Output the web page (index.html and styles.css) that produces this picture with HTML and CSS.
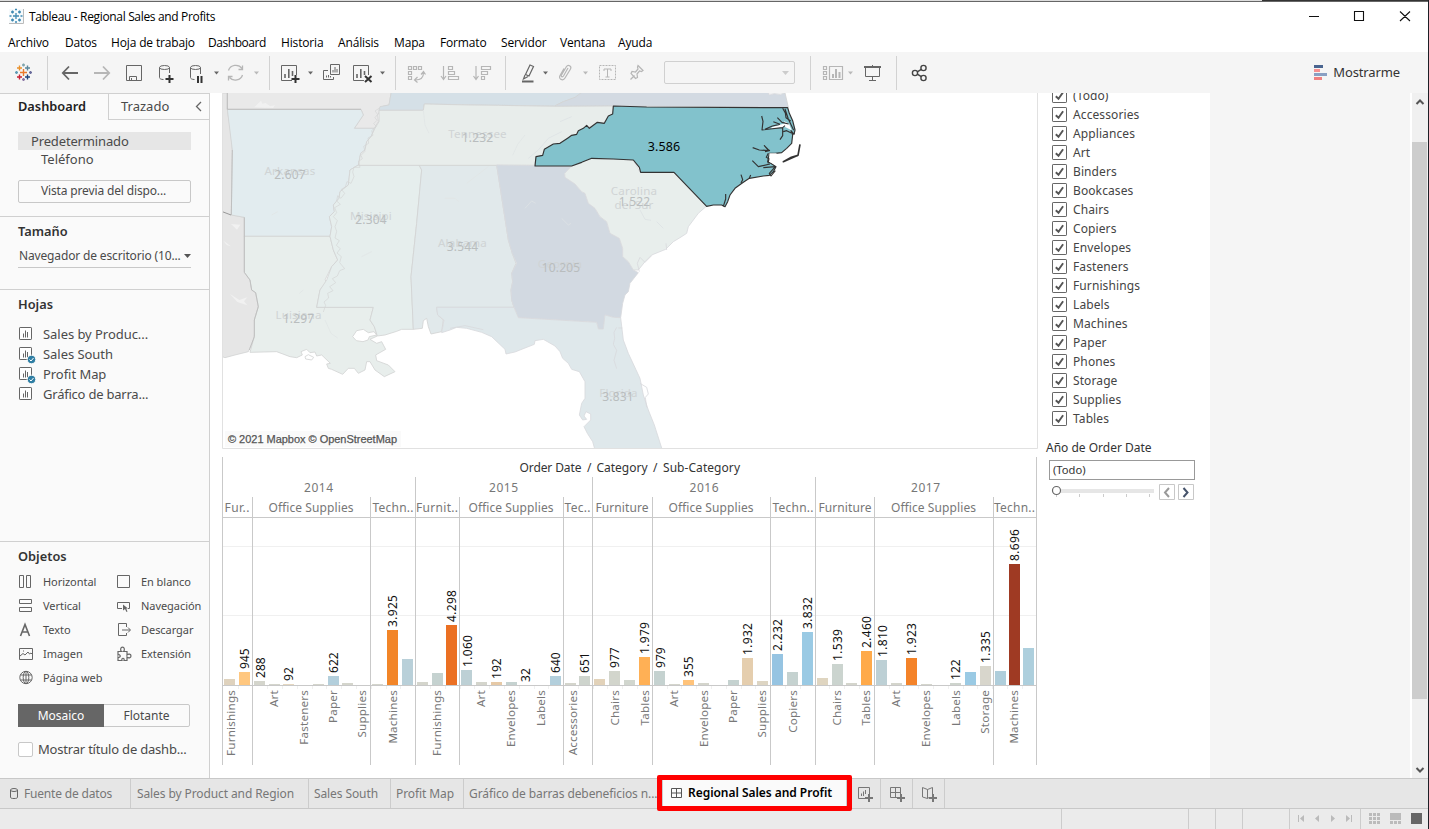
FILE: index.html
```html
<!DOCTYPE html>
<html lang="es">
<head>
<meta charset="utf-8">
<title>Tableau - Regional Sales and Profits</title>
<link rel="stylesheet" href="styles.css">
</head>
<body>
<svg width="0" height="0" class="defs">
  <symbol id="sheet" viewBox="0 0 18 18"><rect x="1.5" y="1.5" width="12" height="12" rx=".6" fill="#fff" stroke="#666"/><path d="M5.5 7.5v4M7.5 4.5v7M9.500 6v5.500" fill="none" stroke="#666"/></symbol>
  <symbol id="used" viewBox="0 0 18 18"><use href="#sheet" width="18" height="18"/><circle cx="13.500" cy="13.500" r="4.300" fill="#2f7ea3" stroke="#fafafa"/><path d="M11.500 13.500l1.500 1.500 2.500-3" fill="none" stroke="#fff"/></symbol>
  <symbol id="check" viewBox="0 0 15 15"><rect x=".5" y=".5" width="14" height="14" rx=".6" fill="#fff" stroke="#666"/><path d="M3.800 8.200l2.700 2.600 4.600-6.600" fill="none" stroke="#555" stroke-width="1.900"/></symbol>
</svg>
<div class="window">
  <div class="edge"><span></span></div>
  <header class="titlebar">
    <svg width="29" height="28" viewBox="0 2 29 28"><path d="M9 9h14v14H9z" fill="#f6fafc"/><path d="M23.500 9v14.500H9" fill="none" stroke="#bbb"/><g stroke="#3f8ab2" stroke-width="1.300"><path d="M13 16h6M16 13v6M11 12h3M12.500 10.500v3M18 12h3M19.500 10.500v3M11 20h3M12.500 18.500v3M18 20h3M19.500 18.500v3M9.500 16h2M20.500 16h2M15 9.500h2M15 22h2"/></g></svg>
    <h1>Tableau - Regional Sales and Profits</h1>
    <svg class="controls" width="128" height="28" viewBox="1300 2 128 28"><path d="M1309 16.500h10M1354.500 11.500h9v9h-9zM1400 11.500l10 9.500M1410 11.500l-10 9.500" fill="none" stroke="#111" stroke-width="1.100"/></svg>
  </header>
  <nav class="menu"><a class="m1">Archivo</a><a class="m2">Datos</a><a class="m3">Hoja de trabajo</a><a class="m4">Dashboard</a><a class="m5">Historia</a><a class="m6">Análisis</a><a class="m7">Mapa</a><a class="m8">Formato</a><a class="m9">Servidor</a><a class="m10">Ventana</a><a>Ayuda</a></nav>
  <div class="toolbar">
    <svg width="47" height="41" viewBox="0 52 47 41" fill="none" stroke-width="1.400"><path d="M20 72.500h7M23.500 69v7" stroke="#eb7a2d"/><path d="M17 68h5M19.500 65.500v5" stroke="#e8912d"/><path d="M25 68h5M27.500 65.500v5" stroke="#5b879b"/><path d="M17 77h5M19.500 74.500v5" stroke="#c72035"/><path d="M25 77h5M27.500 74.500v5" stroke="#1f447e"/><path d="M22 65h3M23.500 63.500v3" stroke="#7fa5ae"/><path d="M22 79.500h3M23.500 78v3" stroke="#8a76a5"/><path d="M15 72.500h3M16.500 71v3" stroke="#5f9cb5"/><path d="M29 72.500h3M30.500 71v3" stroke="#6a6c9c"/></svg>
    <i class="sep"></i>
    <svg width="39" height="41" viewBox="48 52 39 41" class="ic bold"><path d="M78 73H63M69 66.500L62.800 73l6.200 6.500"/></svg>
    <svg width="31" height="41" viewBox="87 52 31 41" class="ic bold off"><path d="M94 73h15M103 66.500l6.200 6.500-6.200 6.500"/></svg>
    <svg width="32" height="41" viewBox="118 52 32 41" class="ic"><path d="M126.500 65.500h15v15h-15zM129.500 80v-3.500h7V80M131.500 78v2.500"/></svg>
    <svg width="31" height="41" viewBox="150 52 31 41" class="ic"><ellipse cx="164.500" cy="67.500" rx="5" ry="2"/><path d="M159.500 67.500v10c0 1.200 1.500 2 4 2M169.500 67.500V73"/><path class="dark" d="M169.500 75v8M165.500 79h8"/></svg>
    <svg width="41" height="41" viewBox="181 52 41 41" class="ic"><ellipse cx="195.500" cy="67.500" rx="5" ry="2"/><path d="M190.500 67.500v10c0 1.200 1.500 2 4 2M200.500 67.500V74"/><path class="dark" d="M198 76v7M201.500 76v7"/><path class="tri" d="M214 71.500h5l-2.500 3z"/></svg>
    <svg width="47" height="41" viewBox="222 52 47 41" class="ic off"><path d="M228.500 70.500a7.500 7 0 0 1 13.500-2M242.500 75a7.500 7 0 0 1-13 2.500M238.500 69.500h4V65.500M232.500 76.500h-4v4" stroke-width="1.300"/><path class="tri" d="M254 71.500h5l-2.500 3z"/></svg>
    <i class="sep"></i>
    <svg width="47" height="41" viewBox="270 52 47 41" class="ic"><path d="M292 80.500h-10.500v-15h15V75"/><path stroke-width="1.600" d="M285 74v4M288.800 69v9M292.500 71v5"/><path class="dark" d="M295.500 75v8M291.500 79h8"/><path class="tri" d="M308 71.500h5l-2.500 3z"/></svg>
    <svg width="30" height="41" viewBox="317 52 30 41" class="ic"><path d="M330.500 64.500h9v10h-9zM328 70.500h-4.500v9h10V77M326.500 75.500v2M328.500 75v2.500M330.500 76v1.500M333 70v2.500M335 67v5.500M337 69v3.500"/></svg>
    <svg width="48" height="41" viewBox="347 52 48 41" class="ic"><path d="M364 80.500h-10.500v-15h15V75"/><path stroke-width="1.600" d="M357 74v4M360.800 69v9M364.500 71v4"/><path class="dark" d="M365 76l6.500 6M371.500 76l-6.500 6"/><path class="tri" d="M380 71.500h5l-2.500 3z"/></svg>
    <i class="sep"></i>
    <svg width="37" height="41" viewBox="396 52 37 41" class="ic off"><path d="M408.500 66.500h3v3h-3zM413.500 66.500h3v3h-3zM418.500 66.500h3v3h-3zM408.500 71.500h3v3h-3zM408.500 76.500h3v3h-3zM423.500 72.500c0 5-3 7.500-8 7.500M421 74.500l2.500-3 2 3M417.500 77l-3 3 3 2.500" stroke-width="1.200"/></svg>
    <svg width="33" height="41" viewBox="433 52 33 41" class="ic off"><path stroke-width="1.200" d="M443.500 66v13M441 76l2.500 3.500 2.500-3.500M448.500 66.500h4v3h-4zM448.500 71.500h6v3h-6zM448.500 76.500h10v3h-10z"/></svg>
    <svg width="39" height="41" viewBox="466 52 39 41" class="ic off"><path stroke-width="1.200" d="M476 66v13M473.500 76l2.500 3.500 2.500-3.500M481.500 66.500h9v3h-9zM481.500 71.500h6v3h-6zM481.500 76.500h3v3h-3z"/></svg>
    <i class="sep"></i>
    <svg width="46" height="41" viewBox="506 52 46 41" class="ic"><path stroke-width="1.200" d="M525.500 74.500l4.500-9.500 3.500 1.500-4.500 9.500zM525 75l-1.500 4 4.500-2.500"/><path class="dark mid" d="M522 81.500h11.500"/><path class="tri" d="M543 71.500h5l-2.500 3z"/></svg>
    <svg width="40" height="41" viewBox="552 52 40 41" class="ic off"><path stroke-width="1.200" d="M568 68l-4.500 8c-1 1.500-3 .5-2-1l5-8.500c1.500-2.500 5.500-.5 4 2.500l-5.500 9c-2 3.500-7 1-5-2.500l4-7"/><path class="tri" d="M583 71.500h5l-2.500 3z"/></svg>
    <svg width="32" height="41" viewBox="592 52 32 41" class="ic off"><path stroke-dasharray="2 1" d="M599.500 65.500h16v14h-16z"/><path d="M604 71v-2h7v2M607.500 69v8M605.500 77h4"/></svg>
    <svg width="40" height="41" viewBox="624 52 40 41" class="ic off"><path stroke-width="1.200" d="M638 65.500l5 5-1.500 1-2-.5-2.500 3 .5 3.500-2 1-4.500-5 1-2 3.500.5 2.500-3-.5-2zM634.500 75.500l-4 4"/></svg>
    <div class="combo"><svg width="9" height="6" viewBox="0 0 9 6"><path d="M1 1h7L4.500 5z" fill="#ccc"/></svg></div>
    <i class="sep after-combo"></i>
    <svg width="46" height="41" viewBox="811 52 46 41" class="ic off"><path stroke-width="1.200" d="M823.500 66.500h3v3h-3zM823.500 71.500h3v3h-3zM823.500 76.500h3v3h-3zM829.500 66.500h13v13h-13z"/><path stroke-width="2" d="M833 74v4M836 69v9M839.500 72v6"/><path class="tri" d="M848 71.500h5l-2.500 3z"/></svg>
    <svg width="39" height="41" viewBox="857 52 39 41" class="ic"><path stroke-width="2" d="M864 67h17"/><path d="M865.500 68v8.500h14V68M872.500 65v1M872.500 77v4M869 80.500h7"/></svg>
    <i class="sep"></i>
    <svg width="44" height="41" viewBox="897 52 44 41" class="ic strong"><circle cx="923.500" cy="68" r="2.600"/><circle cx="915" cy="73" r="2.600"/><circle cx="923.500" cy="78" r="2.600"/><path d="M917.300 71.800l4-2.500M917.300 74.200l4 2.500"/></svg>
    <div class="showme"><svg width="15" height="15" viewBox="0 0 15 15"><path d="M1 0h9v3H1z" fill="#4a6590"/><path d="M1 4h6v3H1z" fill="#f69090"/><path d="M1 8h13v3H1z" fill="#8aa0c3"/><path d="M1 12h8v3H1z" fill="#f08080"/></svg><span>Mostrarme</span></div>
  </div>

  <main class="workspace">
    <aside class="pane">
      <div class="pane-tabs"><b>Dashboard</b><span class="layout"><em>Trazado</em><svg width="8" height="11" viewBox="0 0 8 11"><path d="M6 1L1.500 5.500 6 10" fill="none" stroke="#666" stroke-width="1.300"/></svg></span></div>
      <section class="devices"><div class="default">Predeterminado</div><div class="phone">Teléfono</div><button>Vista previa del dispo...</button></section>
      <section class="size"><h2>Tamaño</h2><div class="select"><span>Navegador de escritorio (10...</span><svg width="7" height="4" viewBox="0 0 7 4"><path d="M0 0h7L3.500 4z" fill="#555"/></svg></div></section>
      <section class="sheets"><h2>Hojas</h2><ul>
        <li><svg width="18" height="18"><use href="#sheet"/></svg>Sales by Produc...</li>
        <li><svg width="18" height="18"><use href="#used"/></svg>Sales South</li>
        <li><svg width="18" height="18"><use href="#used"/></svg>Profit Map</li>
        <li><svg width="18" height="18"><use href="#sheet"/></svg>Gráfico de barra...</li></ul></section>
      <section class="objects"><h2>Objetos</h2>
        <div class="grid">
          <span><svg viewBox="0 0 16 16"><path d="M1.500 1.500h4v12h-4zM8.500 1.500h4v12h-4z"/></svg>Horizontal</span>
          <span><svg viewBox="0 0 16 16"><path d="M1.500 1.500h12v12h-12z"/></svg>En blanco</span>
          <span><svg viewBox="0 0 16 16"><path d="M1.500 1.500h12v4h-12zM1.500 9.500h12v4h-12z"/></svg>Vertical</span>
          <span><svg viewBox="0 0 16 16"><path d="M6 10.500H1.500v-6h12v6H12"/><path d="M7 6.500v6l2-1.500 1.500 3 1-.5-1.300-3H12z" fill="#666" stroke="none"/></svg>Navegación</span>
          <span><svg viewBox="0 0 16 16"><path stroke-width="1.600" d="M2.500 14L7 2.500 11.500 14M4 10h6"/></svg>Texto</span>
          <span><svg viewBox="0 0 16 16"><path d="M10.500 5V1.500h-8v12h8V11M6 8h8M12 5.500L14.500 8 12 10.500"/></svg>Descargar</span>
          <span><svg viewBox="0 0 16 16"><path d="M1.500 2.500h13v11h-13zM2 10l3-2.500L7 9l3-3 1.500 2L13 7l1 1M5 5h1"/></svg>Imagen</span>
          <span><svg viewBox="0 0 16 16"><path stroke-width="1.200" d="M2 5.500h3.500C4 4 4.500 1.200 6.500 1.200S9 4 7.500 5.500H11V9c1.500-1.500 4-1 4 1s-2.500 2.500-4 1v3.500H8c1-3-3-3-2 0H2V11c3 1.500 3-3.500 0-2z"/></svg>Extensión</span>
          <span><svg viewBox="0 0 16 16"><circle cx="8" cy="7.500" r="6.200"/><ellipse cx="8" cy="7.500" rx="2.800" ry="6.200"/><path d="M2.500 5h11M2.500 10h11M8 1.500v12"/></svg>Página web</span>
        </div>
        <div class="mode"><b>Mosaico</b><span>Flotante</span></div>
        <label class="show-title"><i></i>Mostrar título de dashb...</label>
      </section>
    </aside>

    <div class="dashboard">
      <div class="views">
        <svg class="map" width="816" height="356" viewBox="222 93 816 356">
          <g transform="translate(215 90) scale(.333333)" stroke="#d3d4d4" stroke-width="2.500" stroke-linejoin="round">
            <path fill="#e6e6e6" d="M22 9H37V58L47 125 52 180 49 375 88 382V547L105 570 110 600 122 608 130 650 118 690 122 708 117 745 100 785 60 795 30 803 22 800z"/>
            <path fill="#e9e9e9" d="M37 0H530L522 45 505 48 488 75 490 95 478 115H418L445 75 438 58H37z"/>
            <path fill="#d5e0e7" d="M530 0H1110L1090 20 1045 35 1018 48 850 46 628 42 625 61H492L495 50 522 45z"/>
            <path fill="#d3dae2" d="M1110 0H1708L1720 52 1195 48 1018 49 1045 35 1080 22z"/>
            <path fill="#e2ecef" d="M37 58H438L445 75 418 115H478L468 140 455 155 450 180 437 190 430 225 405 240 400 285 375 305 372 325 355 345 358 365 343 380 350 410 345 439H88V382L49 375 52 180z"/>
            <path fill="#e8eeec" d="M88 439H345L355 480 368 510 350 530 340 550 330 570 335 575 315 600 305 652H475L465 690 478 710 487 738 465 748 485 760 500 755 512 778 482 795 485 812 520 825 540 845 508 860 480 840 465 815 455 815 450 840 430 850 418 835 400 835 383 853 350 838 340 835 335 822 346 820 320 795 305 798 300 786 285 788 275 778 258 785 262 795 245 803 225 800 185 785 105 787 118 740 118 690 130 650 122 608 110 600 105 570 88 547z"/>
            <path fill="#e6eeed" d="M430 225H612L620 240 605 400 588 560 595 718 560 718 545 724 510 735 487 738 478 710 465 690 475 652H305L315 600 335 570 350 530 368 510 355 480 345 439 350 410 343 380 358 365 355 345 372 325 375 305 400 285 405 240z"/>
            <path fill="#e1e9eb" d="M612 225H845L880 450 892 490 903 520 890 550 893 575 888 600 890 630 897 652H665L668 675 685 690 680 725 648 732 640 710 635 685 625 692 622 715 595 718 588 560 605 400 620 240z"/>
            <path fill="#e8edeb" d="M492 61H625L628 42 760 45 850 46 1018 49 1195 48V72L1180 80 1165 100 1150 97 1130 112 1115 108 1090 125 1085 140 1065 143 1035 160 1015 162 990 180 983 198 963 202 960 226H430L437 190 450 180 455 155 468 140 480 115 492 95z"/>
            <path fill="none" stroke-width="2" d="M492 55l-12 8 8 10-8 10 6 8-10 10 8 8-14 13 4 14-15 8 2 16-15 9 4 15-12 12 4 10-11 8 4 18-18 0-4 14 4 14-9 20-12-5-5 16-12 7 10 12-11 15-10-8-3 16 11 10-17 10 6 15-10 12 12 12-7 18 5 14-5 20 13 8-9 14 12 10-10 13 13 11-5 18 15 18-15 6-7 16-15 8 10 12-18 12 10 12-16 8 3 14-14 12 5 10-7 20"/>
            <path fill="#fff" d="M413 740l12-18 20-4 15 10 17-3 8 10-22 5-4 10-15 5-20-3z"/><path fill="#fff" d="M270 800l10-6 16 8-6 8-18-3z"/>
            <path fill="none" stroke="#bbb" d="M37 9V58H438M52 180L49 375M88 382V547L105 570 110 600 122 608 130 650 118 690 118 740 103 780"/>
            <path fill="none" stroke="#888" d="M22 365l26 10"/>
            <path fill="#f1f1f1" stroke="none" d="M118 52l12-12 8-8 4 9 10-2 14 10 14-4-6 9zM48 402l28 2-10 15zM25 452l23 17-13-4zM45 612l28 18 24-8-10 12 10 12-30-10z"/>
            <path fill="none" stroke="#e1e6e6" d="M625 60l5 45 12 25M930 135l-22 28-15 33M820 230l-65 50M440 500l30-15M330 690l18 40 20 14M265 600l-12 10M690 325h30l12 10M170 375l18-10"/>
          </g>
          <g transform="translate(500 90) scale(.333333)" stroke="#d8dadd" stroke-width="2.500" stroke-linejoin="round">
            <path fill="#d2d9e1" d="M-10 225L25 450 37 490 50 520 35 550 38 575 33 600 35 630 42 652 55 683 290 697 295 717 310 717 315 675 340 682 362 683 368 640 375 615 385 605 390 580 415 548 400 540 385 515 368 500 368 475 358 445 330 430 320 395 300 380 285 355 265 340 255 310 245 305 225 282 195 262 194 250 215 228z"/>
            <path fill="#e8eeec" d="M215 228L245 215 275 205 400 210 420 247H522L620 348 595 370 565 410 560 430 540 443 520 455 497 478 455 495 435 515 415 540 400 540 385 515 368 500 368 475 358 445 330 430 320 395 300 380 285 355 265 340 255 310 245 305 225 282 195 262 194 250z"/>
            <path fill="#dfe8eb" d="M-190 652H42L55 683 290 697 295 717 310 717 315 675 340 682 362 683 370 750 385 790 420 865 430 915 445 960 463 1005 487 1080H285L278 1055 262 1030 252 1010 272 990 272 972 258 965 252 978 260 988 248 990 238 975 245 940 255 925 255 875 238 845 215 838 205 820 188 805 180 785 165 768 130 748 105 752 103 763 60 780 45 786 18 792 15 778 -25 740 -55 727 -100 715 -130 712 -150 720 -175 728 -168 690 -187 675z"/>
            <path fill="none" d="M-150 715l45-8 55 12M420 880l20 12 5 20-9 10 4 30M418 545l-6-25 8-18 15 15 20-20M500 480l-2-20M350 712l-8 15 2 18-4 18 10 18-8 30 8 25M355 714h12"/>
            <path fill="#fff" d="M805 9l3 6 15-4 18 3 12-5z"/>
            <path fill="none" stroke="#dde2e5" d="M75 355l20-22 12 7M185 385l20 20 8-5M85 205l30-25 30-35 40-20M180 95l35-15M420 360l15 28 18 3M470 395l20 20"/>
            <path fill="#82c2cc" stroke="#333" stroke-width="3.500" d="M340 48L440 51 863 53 868 70 878 92 885 120 882 133 873 122 878 135 875 160 860 175 845 188 825 190 808 190 803 215 812 220 828 230 820 245 808 256 790 258 748 265 730 277 705 295 690 315 683 335 675 350 665 345 640 345 620 349 522 247H422L418 232 400 210 340 207 275 205 245 217 215 228H105L108 200 128 196 133 178 160 162 180 160 205 143 215 136 230 133 235 122 250 115 260 106 268 115 292 97 313 100 325 78 338 72z"/>
            <path fill="#fff" stroke="none" d="M815 112l40-12-3-7 15 8 8 20-20-10-42 5zM808 190h22l-6 18 4 18-18-10z"/>
            <path fill="none" stroke="#333" stroke-width="3.500" d="M785 78l4 16-3 26 24-3 38-4 7-6M795 118l22-10 22-5M820 95l20 8M832 83l14 14 20 5M848 55l8 14 2 14 14 10M855 57l10 30 16 34M848 113v24l-8 12M850 125l10-3 14 7M758 173l20 7 28 2-13-15 14 14M795 185l15-4M757 212l18 18 35-8M805 190l-6 12 8 4-3 14M790 233l36-3-18 20 5 8 13-16M748 265l4-10M723 254l5 15-5 10M677 312v15l-7 22"/>
            <path fill="none" stroke="#333" stroke-width="5" d="M900 163l-6 33-44 19 24-13 20-6"/>
          </g>
          <g class="faint" text-anchor="middle">
            <text x="290" y="175">Arkansas</text><text x="477.500" y="138">Tennessee</text><text x="371" y="220">Misisipi</text><text x="462.500" y="247">Alabama</text><text x="298.500" y="319">Luisiana</text><text x="560" y="268">Georgia</text><text x="634" y="195">Carolina</text><text x="634" y="209">del Sur</text><text x="618.500" y="397">Florida</text>
          </g>
          <g class="dim" text-anchor="middle">
            <text x="290" y="179">2.607</text><text x="477.500" y="142">1.232</text><text x="371" y="224">2.304</text><text x="462.500" y="251">3.544</text><text x="298.500" y="323">1.297</text><text x="561" y="272">10.205</text><text x="634.500" y="206">1.522</text><text x="618" y="401">3.831</text>
          </g>
          <text class="nc" x="664" y="151" text-anchor="middle">3.586</text>
          <path d="M225 431h176v16H225z" fill="#fafafa"/>
          <text class="credit" x="228" y="443" textLength="169">© 2021 Mapbox © OpenStreetMap</text>
          <path d="M222.500 93V448.500H1037.500V93" fill="none" stroke="#e1e1e1"/>
        </svg>
        <svg class="chart" id="chart" width="816" height="329" viewBox="222 449 816 329"></svg>
      </div>
      <div class="filters">
        <ul>
          <li><svg><use href="#check"/></svg>(Todo)</li><li><svg><use href="#check"/></svg>Accessories</li><li><svg><use href="#check"/></svg>Appliances</li><li><svg><use href="#check"/></svg>Art</li><li><svg><use href="#check"/></svg>Binders</li><li><svg><use href="#check"/></svg>Bookcases</li><li><svg><use href="#check"/></svg>Chairs</li><li><svg><use href="#check"/></svg>Copiers</li><li><svg><use href="#check"/></svg>Envelopes</li><li><svg><use href="#check"/></svg>Fasteners</li><li><svg><use href="#check"/></svg>Furnishings</li><li><svg><use href="#check"/></svg>Labels</li><li><svg><use href="#check"/></svg>Machines</li><li><svg><use href="#check"/></svg>Paper</li><li><svg><use href="#check"/></svg>Phones</li><li><svg><use href="#check"/></svg>Storage</li><li><svg><use href="#check"/></svg>Supplies</li><li><svg><use href="#check"/></svg>Tables</li>
        </ul>
        <h3>Año de Order Date</h3>
        <div class="year">(Todo)</div>
        <svg class="slider" width="150" height="20" viewBox="1048 482 150 20"><path d="M1056 489h98v4h-98z" fill="#e6e6e6"/><path d="M1056.500 494v3M1079.500 494v3M1103.500 494v3M1126.500 494v3M1149.500 494v3" stroke="#ccc"/><circle cx="1056.500" cy="490.500" r="4" fill="#fff" stroke="#666" stroke-width="1.200"/><path d="M1159.500 484.500h15v15h-15zM1178.500 484.500h15v15h-15z" fill="#fff" stroke="#c8c8c8"/><path d="M1169 488l-4 4.500 4 4.500" fill="none" stroke="#999" stroke-width="2"/><path d="M1183.500 488l4 4.500-4 4.500" fill="none" stroke="#46536b" stroke-width="2"/></svg>
      </div>
      <div class="blank"></div>
      <div class="scroll"><svg width="15" height="18"><path d="M4.500 11L8 7.500l3.500 3.500" fill="none" stroke="#555" stroke-width="2"/></svg><i></i><svg width="15" height="18"><path d="M4.500 8L8 11.500 11.500 8" fill="none" stroke="#555" stroke-width="2"/></svg></div>
    </div>
  </main>

  <footer class="tabs">
    <span class="t1"><svg width="14" height="14" viewBox="0 0 14 14" fill="none" stroke="#666"><ellipse cx="5" cy="3" rx="3.500" ry="1.500"/><path d="M1.500 3v7c0 1.200 1 1.500 3.500 1.500s3.500-.3 3.500-1.500V3"/></svg>Fuente de datos</span>
    <span class="t2">Sales by Product and Region</span><span class="t3">Sales South</span><span class="t4">Profit Map</span><span class="t5">Gráfico de barras debeneficios n...</span>
    <span class="active"><svg width="12" height="12" viewBox="0 0 12 12"><path d="M.5 1.500h10v9H.5zM5.500 1.500v9M.5 6h10" fill="none" stroke="#555"/></svg>Regional Sales and Profit</span>
    <span class="add a1"><svg viewBox="0 0 16 16"><path d="M8 12.500H1.500v-11h11V8M4.500 7.500V10M6.500 5.500V10M8.500 4v4"/><path d="M12 8v8M8 12h8" stroke-width="2"/></svg></span>
    <span class="add"><svg viewBox="0 0 16 16"><path d="M9 11.500H2.500v-10h10V8M7.500 1.500v10M2.500 6.500h10"/><path d="M13 8v8M9 12h8" stroke-width="2"/></svg></span>
    <span class="add"><svg viewBox="0 0 16 16"><path d="M9 11.500l-1.500 1L2.500 11V1.500l5 2 5-2V8M7.500 3.500v9"/><path d="M13 8v8M9 12h8" stroke-width="2"/></svg></span>
    <i class="highlight"></i>
  </footer>
  <div class="status"><svg width="368" height="20" viewBox="1060 809 368 20"><path d="M1061.500 809v20M1188.500 809v20M1215.500 809v20M1242.500 809v20M1289.500 809v20M1360.500 809v20" stroke="#ccc"/><path d="M1298 815h1v7h-1zM1304 815v7l-4-3.500zM1319 815v7l-4-3.500zM1331 815v7l4-3.500zM1346 815v7l4-3.500zM1351 815h1v7h-1zM1369 813h3v3h-3zM1373 813h3v3h-3zM1377 813h3v3h-3zM1369 817h3v3h-3zM1373 817h3v3h-3zM1377 817h3v3h-3zM1369 821h3v3h-3zM1373 821h3v3h-3zM1377 821h3v3h-3zM1390 813h11v7h-11zM1390 821h3v3h-3zM1394 821h3v3h-3zM1398 821h3v3h-3z" fill="#bbb"/><path d="M1411 813h11v11h-11z" fill="#666"/></svg></div>
</div>
<script src="chart.js"></script>
</body>
</html>
```
FILE: chart.js
```js
const chart = document.getElementById('chart');
const BASE = 685;
const tan = '#dfd2bd', gray = '#d4d5cc', teal = '#c5d2d0', mist = '#b9d0d9', sky = '#9acae4';

// x, height, colour, value label
const bars = [
  [224, 6, tan], [239, 13, '#ffc77f', '945'], [254, 4, gray, '288'], [269, 1, gray], [283, 1, '#e5d7c0', '92'],
  [313, 1, gray], [328, 9, '#b3cfdc', '622'], [342, 2, gray], [372, 1, gray], [387, 55, '#f28528', '3.925'],
  [402, 26, mist], [417, 3, gray], [432, 12, teal], [446, 60, '#eb7023', '4.298'], [461, 15, '#bdd0d5', '1.060'],
  [476, 3, gray], [491, 3, '#e6c9a6', '192'], [506, 3, teal], [520, 0, gray, '32'], [550, 9, '#b3cfdc', '640'],
  [565, 2, gray], [579, 9, '#ced4cd', '651'], [594, 6, '#e2d2b9'], [609, 14, '#d2d5cc', '977'], [624, 5, '#d1d6ce'],
  [639, 28, '#ffb055', '1.979'], [654, 14, teal, '979'], [669, 1, gray], [683, 5, '#ffc37a', '355'], [698, 2, gray],
  [728, 5, teal], [742, 27, '#e5ceae', '1.932'], [757, 4, '#ddd5c3'], [772, 31, '#96c4e2', '2.232'], [787, 13, teal],
  [802, 53, sky, '3.832'], [817, 7, '#dfd5c0'], [832, 21, '#cbd4cf', '1.539'], [846, 2, gray], [861, 34, '#ffaa4a', '2.460'],
  [876, 25, '#bdd0d5', '1.810'], [891, 2, gray], [906, 27, '#f48329', '1.923'], [921, 1, gray], [950, 2, '#ced4cd', '122'],
  [965, 13, sky], [980, 19, '#d8d6cc', '1.335'], [995, 14, '#afcedb'], [1009, 121, '#9f3a23', '8.696'], [1023, 37, '#adcfdd']
];
const axis = [
  [231, 'Furnishings'], [274, 'Art'], [304, 'Fasteners'], [333, 'Paper'], [362, 'Supplies'], [393, 'Machines'],
  [437, 'Furnishings'], [481, 'Art'], [511, 'Envelopes'], [541, 'Labels'], [573, 'Accessories'], [615, 'Chairs'],
  [645, 'Tables'], [674, 'Art'], [704, 'Envelopes'], [733, 'Paper'], [762, 'Supplies'], [793, 'Copiers'],
  [837, 'Chairs'], [866, 'Tables'], [896, 'Art'], [926, 'Envelopes'], [956, 'Labels'], [985, 'Storage'], [1014, 'Machines']
];
const headings = [
  [318.5, 492, '2014', 29], [503.500, 492, '2015', 29], [704, 492, '2016', 29], [925.500, 492, '2017', 29],
  [237, 512, 'Fur..', 25], [311, 512, 'Office Supplies', 85], [393, 512, 'Techn..', 41], [437, 512, 'Furnit..', 42],
  [511, 512, 'Office Supplies', 85], [577.500, 512, 'Tec..', 26], [622, 512, 'Furniture', 53],
  [711, 512, 'Office Supplies', 85], [793, 512, 'Techn..', 41], [845, 512, 'Furniture', 53],
  [933.500, 512, 'Office Supplies', 85], [1014.500, 512, 'Techn..', 41]
];

let out = '<path class="gridline" d="M223 546.5H1036M223 615.5H1036"/>';
for (let x = 237.5; x < 1036; x += 14.8) out += `<path class="gridline" d="M${Math.round(x) + .5} 686v3"/>`;
for (const [x, h, fill, label] of bars) {
  out += `<rect x="${x}" y="${BASE - h}" width="11" height="${h}" fill="${fill}"/>`;
  if (label) {
    const len = label.length > 4 ? 32 : label.length * 6.900;
    const shift = x === 254 || x === 461 || x === 654 || x === 876 ? 11 : 9.5;
    out += `<text class="value" textLength="${len}" transform="translate(${x + shift} ${BASE - h - 3}) rotate(-90)">${label}</text>`;
  }
}
out += '<path class="rule" d="M222.500 457V765M1036.500 457V765M415.500 477V765M592.500 477V765M815.500 477V765M252.500 497V765M370.500 497V765M459.500 497V765M563.500 497V765M652.500 497V765M770.500 497V765M874.500 497V765M993.500 497V765M223 517.500H1036M223 685.500H1036"/>';
for (const [x, name] of axis) out += `<text class="axis" text-anchor="end" transform="translate(${x + 4} 690) rotate(-90)">${name}</text>`;
for (const [x, y, name, w] of headings) out += `<text class="head" text-anchor="middle" x="${x}" y="${y}" textLength="${w}">${name}</text>`;
out += '<text class="title" x="519.500" y="472" textLength="62">Order Date</text><text class="title" x="587" y="472">/</text><text class="title" x="596.500" y="472" textLength="51">Category</text><text class="title" x="653" y="472">/</text><text class="title" x="663" y="472" textLength="77">Sub-Category</text>';
chart.innerHTML = out;
```
FILE: styles.css
```css
* { box-sizing: border-box; }
body { margin: 0; overflow: hidden; background: #fff; color: #333; font: 12px "Noto Sans", "Open Sans", sans-serif; }
h1, h2, h3, ul { margin: 0; padding: 0; list-style: none; }
svg { display: block; flex: none; }
.defs { position: absolute; }
.window { width: 1429px; height: 829px; border-right: 1px solid #1c1f26; display: flex; flex-direction: column; }
.edge { height: 2px; background: #ddd; border-bottom: 1px solid #666; display: flex; justify-content: flex-end; }
.edge span { width: 166px; background: #333; }
.titlebar { height: 30px; display: flex; align-items: flex-start; color: #000; }
.titlebar h1 { font: 12px/30px "Open Sans", sans-serif; letter-spacing: -.34px; }
.controls { margin-left: auto; }
.menu { height: 20px; display: flex; padding-left: 8px; color: #000; font: 12px/22px "Open Sans", sans-serif; letter-spacing: -.15px; white-space: nowrap; }
.menu a { flex: none; }
.m1 { width: 57px; } .m2 { width: 46px; } .m3 { width: 97px; } .m4 { width: 73px; } .m5 { width: 57px; }
.m4 { letter-spacing: -.45px; }
.m6 { width: 56px; } .m7 { width: 46px; } .m8 { width: 61px; } .m9 { width: 59px; } .m10 { width: 58px; }
.toolbar { height: 41px; flex: none; background: #f5f5f5; display: flex; align-items: center; }
.sep { width: 1px; height: 34px; background: #d2d2d2; flex: none; }
.ic { fill: none; stroke: #666; }
.ic.off { stroke: #b6b6b6; }
.ic.bold { stroke-width: 1.8; }
.ic.strong { stroke: #444; stroke-width: 1.4; }
.ic .dark { stroke: #333; stroke-width: 2; }
.ic .dark.mid { stroke: #666; }
.ic .tri { fill: #666; stroke: none; }
.ic.off .tri { fill: #b9b9b9; }
.combo { width: 131px; height: 23px; border: 1px solid #d0d0d0; border-radius: 2px; display: flex; align-items: center; justify-content: flex-end; padding-right: 4px; }
.after-combo { margin-left: 15px; }
.showme { margin-left: auto; margin-right: 28px; display: flex; align-items: center; gap: 5px; font-size: 13px; line-height: 16px; color: #333; letter-spacing: -.12px; padding-bottom: 1px; }
.workspace { height: 685px; display: flex; }
.pane { width: 210px; background: #fafafa; border-right: 1px solid #d0d0d0; display: flex; flex-direction: column; color: #4a4a4a; white-space: nowrap; }
.pane-tabs { height: 27px; display: flex; line-height: 25px; border-top: 1px solid #d0d0d0; }
.pane-tabs b { width: 108px; padding-left: 18px; font-weight: 600; color: #222; font-size: 12.8px; }
.layout { flex: 1; display: flex; align-items: center; justify-content: space-between; padding: 0 6px 0 12px; border-left: 1px solid #d0d0d0; border-bottom: 1px solid #d0d0d0; }
.layout em { font-style: normal; font-size: 13px; }
.devices { height: 96px; padding: 12px 18px 0; }
.default { height: 18px; background: #e6e6e6; padding-left: 13px; font-size: 13px; line-height: 18px; letter-spacing: -.15px; }
.phone { height: 18px; padding-left: 23px; font-size: 13px; line-height: 18px; }
.devices button { display: block; margin-top: 12px; width: 173px; height: 23px; border: 1px solid #c8c8c8; border-radius: 2px; background: #fafafa; color: #4a4a4a; font: 12px "Noto Sans", sans-serif; letter-spacing: -.15px; padding: 0 1px 2px 0; }
.devices button { text-align: left; padding-left: 22px; }
.pane h2 { font-size: 12.8px; line-height: 18px; font-weight: 600; color: #333; }
.size { height: 73px; border-top: 1px solid #d0d0d0; padding: 5px 18px 0; }
.select { margin-top: 5px; height: 23px; border-bottom: 1px solid #c8c8c8; display: flex; align-items: center; justify-content: space-between; padding: 0 0 1px 1px; letter-spacing: -.15px; }
.sheets { height: 252px; border-top: 1px solid #d0d0d0; padding: 5px 18px 0; }
.sheets ul { margin-top: 11px; }
.sheets li { height: 20px; display: flex; align-items: center; gap: 7px; font-size: 13px; letter-spacing: -.05px; }
.sheets li:last-child { letter-spacing: -.22px; }
.sheets svg { margin-top: 2px; }
.objects { flex: 1; border-top: 1px solid #d0d0d0; padding: 5px 0 0 18px; }
.grid { display: grid; grid-template-columns: 98px 93px; grid-auto-rows: 24px; margin-top: 4px; font-size: 11px; }
.grid span { display: flex; align-items: center; gap: 9px; letter-spacing: -.05px; }
.grid svg { width: 16px; height: 16px; fill: none; stroke: #666; margin-top: 2px; }
.mode { margin-top: 15px; width: 172px; height: 23px; border: 1px solid #c8c8c8; display: flex; text-align: center; line-height: 21px; font-size: 12px; border-radius: 2px; }
.mode b { width: 86px; margin: -1px 0 -1px -1px; padding-top: 1px; background: #666; color: #fff; font-weight: 400; }
.mode span { flex: 1; }
.show-title { display: flex; align-items: center; gap: 5px; margin-top: 13px; font-size: 13px; line-height: 18px; letter-spacing: -.2px; }
.show-title i { width: 15px; height: 15px; background: #fff; border: 1px solid #c8c8c8; border-radius: 2px; }
.dashboard { flex: 1; display: flex; min-width: 0; padding-left: 12px; }
.views { width: 816px; }
.map text { font-size: 12px; letter-spacing: .15px; }
.map .faint text { font-size: 11.6px; }
.faint { fill: #d0d4d5; }
.dim { fill: #b9bdbe; }
.map .nc { fill: #000; font-size: 12.500px; }
.map .credit { font: 11px "Liberation Sans", sans-serif; fill: #555; stroke: #555; stroke-width: .25px; letter-spacing: 0; }
.gridline { stroke: #f0f0f0; }
.rule { stroke: #c9c9c9; fill: none; }
.value { font-size: 12px; fill: #111; }
.axis { font-size: 11.6px; fill: #787878; letter-spacing: .2px; }
.head { font-size: 12px; fill: #777; }
.title { font-size: 12px; fill: #333; }
.filters { width: 172px; height: 685px; overflow: hidden; padding-left: 8px; }
.filters ul { margin-top: -7px; padding-left: 6px; }
.filters li { height: 19px; display: flex; align-items: center; gap: 6px; letter-spacing: .1px; color: #444; }
.filters li svg { width: 15px; height: 15px; }
.filters h3 { font-size: 12px; font-weight: 400; line-height: 17px; margin-top: 11px; }
.year { margin: 4px 0 2px 3px; width: 146px; height: 20px; border: 1px solid #999; padding-left: 3px; font-size: 11.2px; line-height: 18px; }
.slider { margin-left: 2px; }
.blank { width: 201px; background: #f5f5f5; border-right: 1px solid #fff; }
.scroll { width: 17px; background: #f0f0f0; display: flex; flex-direction: column; justify-content: space-between; border-left: 1px solid #fff; }
.scroll i { background: #cdcdcd; height: 557px; width: 15px; margin-bottom: 31px; }
.tabs { position: relative; height: 31px; flex: none; border-top: 1px solid #c8c8c8; border-bottom: 1px solid #c8c8c8; background: #e6e6e6; display: flex; color: #777; line-height: 29px; white-space: nowrap; letter-spacing: -.1px; }
.tabs span { flex: none; border-right: 1px solid #ccc; padding-left: 6px; }
.tabs .t1 { width: 131px; padding-left: 9px; display: flex; align-items: center; gap: 1px; letter-spacing: -.18px; }
.t2 { width: 178px; } .t3 { width: 82px; } .t4 { width: 73px; } .t5 { width: 199px; }
.tabs .t3, .tabs .t4, .tabs .t5 { padding-left: 5px; }
.tabs .active { width: 184px; background: #fafafa; color: #000; font-weight: 600; display: flex; align-items: center; gap: 5px; padding: 0 0 2px 8px; letter-spacing: -.04px; }
.tabs .add { width: 32px; display: flex; align-items: center; padding: 0 0 0 7px; }
.tabs .a1 { width: 34px; padding-left: 10px; }
.add svg { width: 16px; height: 16px; fill: none; stroke: #777; overflow: visible; }
.highlight { position: absolute; left: 657px; top: -4px; width: 195px; height: 36px; border: 5px solid #f00; border-radius: 2px; }
.status { height: 20px; background: #ebebeb; display: flex; justify-content: flex-end; }
```
